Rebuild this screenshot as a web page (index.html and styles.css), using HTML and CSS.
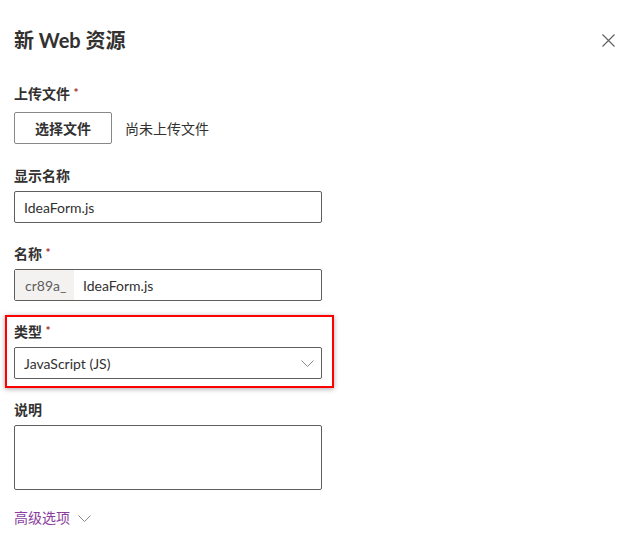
FILE: index.html
```html
<!DOCTYPE html>
<html lang="zh">
<head>
<meta charset="utf-8">
<title>新 Web 资源</title>
<link rel="stylesheet" href="styles.css">
</head>
<body>
<div class="panel">
  <header class="head">
    <h1 class="title">新 Web 资源</h1>
    <button class="close" aria-label="关闭">
      <svg width="13" height="13" viewBox="0 0 13 13"><path d="M0.5 0.5 L12.5 12.5 M12.5 0.5 L0.5 12.5" stroke="#605e5c" stroke-width="1.1" fill="none"/></svg>
    </button>
  </header>

  <div class="field first">
    <div class="label">上传文件 <span class="req">*</span></div>
    <div class="upload">
      <button class="btn">选择文件</button>
      <span class="nofile">尚未上传文件</span>
    </div>
  </div>

  <div class="field">
    <div class="label">显示名称</div>
    <div class="input"><span class="val">IdeaForm.js</span></div>
  </div>

  <div class="field tight">
    <div class="label">名称 <span class="req">*</span></div>
    <div class="input prefixed"><span class="prefix">cr89a_</span><span class="val">IdeaForm.js</span></div>
  </div>

  <div class="field highlight">
    <div class="label">类型 <span class="req">*</span></div>
    <div class="input select">
      <span class="val">JavaScript (JS)</span>
      <svg class="chev" width="13" height="7" viewBox="0 0 13 7"><path d="M0.5 0.5 L6.5 6.5 L12.5 0.5" stroke="#8a8886" stroke-width="1" fill="none"/></svg>
    </div>
  </div>

  <div class="field after-hl">
    <div class="label">说明</div>
    <div class="input textarea"></div>
  </div>

  <div class="adv">
    <span class="adv-text">高级选项</span>
    <svg class="chev" width="13" height="7" viewBox="0 0 13 7"><path d="M0.5 0.5 L6.5 6.5 L12.5 0.5" stroke="#8a8886" stroke-width="1" fill="none"/></svg>
  </div>
</div>
</body>
</html>
```

FILE: styles.css
```css
* { box-sizing: border-box; }
html, body { margin: 0; background: #fff; }
body {
  font-family: "Lato", "Noto Sans CJK SC", sans-serif;
  color: #323130;
  font-size: 14px;
}
.panel {
  width: 635px;
  height: 549px;
  padding: 24px 14px 0 14px;
  display: flex;
  flex-direction: column;
}
.head {
  display: flex;
  justify-content: space-between;
  align-items: flex-start;
}
.title {
  margin: 0;
  font-size: 20px;
  font-weight: 700;
  line-height: 32px;
  height: 32px;
}
.close {
  border: 0;
  background: none;
  padding: 0;
  margin: 10px 6px 0 0;
  width: 13px;
  height: 13px;
  display: flex;
}
.field { display: flex; flex-direction: column; margin-top: 22px; }
.field.first { margin-top: 28px; }
.field.tight { margin-top: 21px; }
.label {
  font-weight: 700;
  line-height: 20px;
  height: 20px;
  font-size: 14px;
  margin-bottom: 5px;
  white-space: nowrap;
}
.req { color: #a4262c; font-size: 12px; line-height: 10px; vertical-align: 2px; }
.upload { display: flex; align-items: center; gap: 13px; margin-top: 3px; }
.btn {
  width: 98px;
  height: 32px;
  border: 1px solid #8a8886;
  border-radius: 2px;
  background: #fff;
  font-family: inherit;
  font-size: 14px;
  font-weight: 700;
  color: #323130;
  padding: 0;
}
.nofile { color: #323130; font-size: 14px; }
.input {
  width: 308px;
  height: 32px;
  border: 1px solid #605e5c;
  border-radius: 2px;
  display: flex;
  align-items: center;
  padding: 0 9px;
  font-size: 14px;
  color: #323130;
}
.input.prefixed { padding: 0; }
.prefix {
  background: #f3f2f1;
  color: #605e5c;
  height: 100%;
  display: flex;
  align-items: center;
  padding: 0 10px;
  width: 59px;
}
.prefixed .val { padding-left: 9px; }
.select { justify-content: space-between; padding-right: 7px; }
.highlight {
  margin-top: 14px;
  margin-left: -9px;
  width: 329px;
  border: 2px solid #ff0000;
  padding: 5px 11px 7px 7px;
  box-shadow: 0 1px 5px rgba(0, 0, 0, 0.35);
}
.after-hl { margin-top: 12px; }
.textarea { height: 65px; }
.adv {
  margin-top: 18px;
  display: flex;
  align-items: center;
  gap: 8px;
  line-height: 20px;
}
.adv-text { color: #8a3d9e; font-size: 14px; }
```
